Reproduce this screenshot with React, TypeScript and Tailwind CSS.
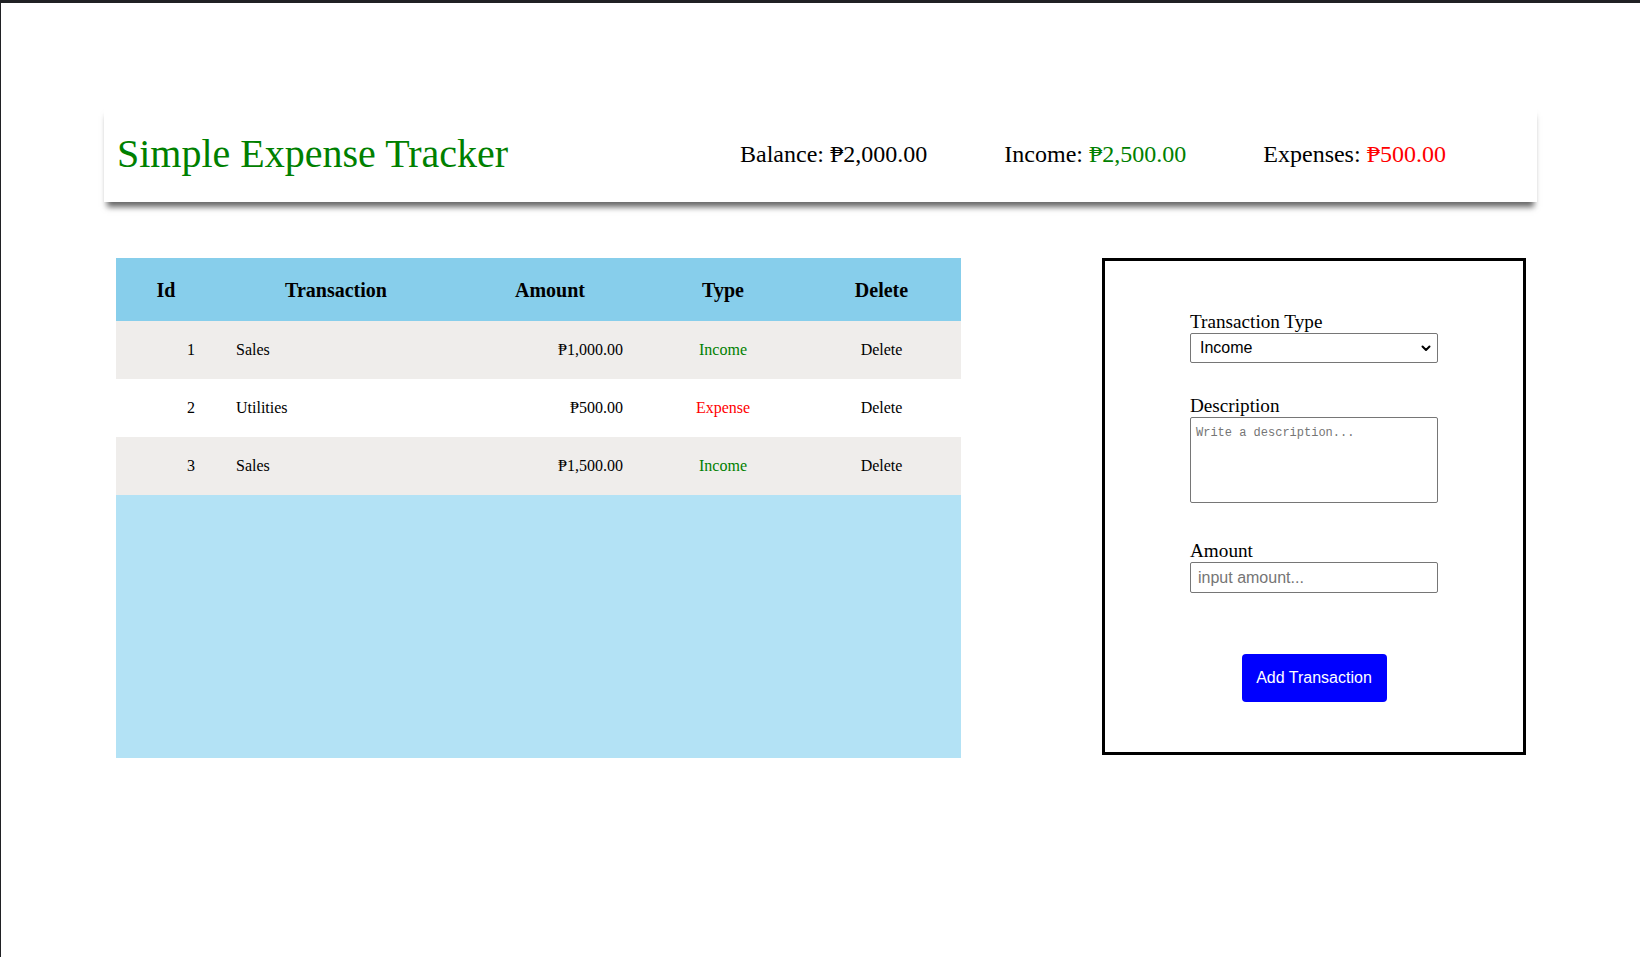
import React from "react";

type Txn = {
  id: number;
  description: string;
  amount: number;
  type: "Income" | "Expense";
};

const transactions: Txn[] = [
  { id: 1, description: "Sales", amount: 1000, type: "Income" },
  { id: 2, description: "Utilities", amount: 500, type: "Expense" },
  { id: 3, description: "Sales", amount: 1500, type: "Income" },
];

const peso = (n: number) =>
  "\u20B1" + n.toLocaleString("en-US", { minimumFractionDigits: 2, maximumFractionDigits: 2 });

export default function App() {
  const income = transactions.filter((t) => t.type === "Income").reduce((s, t) => s + t.amount, 0);
  const expenses = transactions.filter((t) => t.type === "Expense").reduce((s, t) => s + t.amount, 0);

  return (
    <div className="min-h-[957px] bg-white border-t-[3px] border-l border-[#202124] font-['Liberation_Serif',serif] text-black">
      {/* Header */}
      <header className="ml-[103px] mt-[102px] flex h-[97px] w-[1433px] items-center bg-white pl-[13px] shadow-[0_8px_6px_-3px_rgba(0,0,0,0.6)]">
        <div className="w-[623px]">
          <h1 className="text-[40px] leading-[44px] text-[#008000]">Simple Expense Tracker</h1>
        </div>
        <div className="flex gap-[77px] text-[24px] leading-[28px]">
          <p>
            Balance: <span>{peso(income - expenses)}</span>
          </p>
          <p>
            Income: <span className="text-[#008000]">{peso(income)}</span>
          </p>
          <p>
            Expenses: <span className="text-[#ff0000]">{peso(expenses)}</span>
          </p>
        </div>
      </header>

      {/* Main */}
      <main className="mt-[56px] flex items-start pl-[115px]">
        <div className="h-[500px] w-[845px] bg-[#b3e2f5]">
          <table className="w-full table-fixed border-collapse">
            <colgroup>
              <col className="w-[100px]" />
              <col className="w-[240px]" />
              <col className="w-[188px]" />
              <col className="w-[158px]" />
              <col className="w-[159px]" />
            </colgroup>
            <thead>
              <tr className="h-[63px] bg-[#87ceeb] text-[20px] font-bold">
                <th className="text-center">Id</th>
                <th className="text-center">Transaction</th>
                <th className="text-center">Amount</th>
                <th className="text-center">Type</th>
                <th className="text-center">Delete</th>
              </tr>
            </thead>
            <tbody className="text-[16px]">
              {transactions.map((t, i) => (
                <tr key={t.id} className={i % 2 === 0 ? "h-[58px] bg-[#efedeb]" : "h-[58px] bg-white"}>
                  <td className="pr-[21px] text-right">{t.id}</td>
                  <td className="pl-[20px] text-left">{t.description}</td>
                  <td className="pr-[21px] text-right">{peso(t.amount)}</td>
                  <td className={t.type === "Income" ? "text-center text-[#008000]" : "text-center text-[#ff0000]"}>
                    {t.type}
                  </td>
                  <td className="text-center">Delete</td>
                </tr>
              ))}
            </tbody>
          </table>
        </div>

        {/* Form */}
        <form className="ml-[141px] flex h-[497px] w-[424px] flex-col items-center border-[3px] border-black pt-[50px]">
          <div className="flex w-[248px] flex-col">
            <label className="text-[19.2px] leading-[22px]">Transaction Type</label>
            <div className="relative">
              <select className="block h-[30px] w-[248px] appearance-none rounded-[2px] border border-[#767676] bg-white pl-[9px] font-['Liberation_Sans',Arial,sans-serif] text-[16px] text-black">
                <option>Income</option>
                <option>Expense</option>
              </select>
              <svg
                className="pointer-events-none absolute right-[7px] top-[12px]"
                width="10"
                height="7"
                viewBox="0 0 10 7"
                fill="none"
              >
                <path d="M1.5 1.5 L5 5 L8.5 1.5" stroke="#000" strokeWidth="2" strokeLinecap="round" strokeLinejoin="round" />
              </svg>
            </div>

            <label className="mt-[32px] text-[19.2px] leading-[22px]">Description</label>
            <textarea
              className="block h-[86px] w-[248px] resize-none rounded-[2px] border border-[#767676] px-[5px] pt-[6px] font-['Liberation_Mono',monospace] text-[12px] placeholder:text-[#757575]"
              placeholder="Write a description..."
            />

            <label className="mt-[37px] text-[19.2px] leading-[22px]">Amount</label>
            <input
              className="block h-[31px] w-[248px] rounded-[2px] border border-[#767676] pl-[7px] font-['Liberation_Sans',Arial,sans-serif] text-[16px] placeholder:text-[#757575]"
              placeholder="input amount..."
            />
          </div>

          <button
            type="button"
            className="mt-[61px] h-[48px] w-[145px] rounded-[4px] bg-[#0000ff] font-['Liberation_Sans',Arial,sans-serif] text-[16px] text-white"
          >
            Add Transaction
          </button>
        </form>
      </main>
    </div>
  );
}
